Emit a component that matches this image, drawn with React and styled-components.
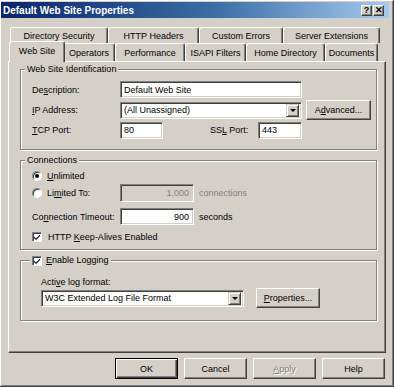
import React from 'react';
import styled, { createGlobalStyle } from 'styled-components';

const GlobalStyle = createGlobalStyle`
  body {
    margin: 0;
    background: #d4d0c8;
    font-family: "Liberation Sans", Arial, sans-serif;
    font-size: 9px;
    color: #000;
  }
  u { text-underline-offset: 1px; }
`;

const Window = styled.div`
  box-sizing: border-box;
  width: 394px;
  height: 387px;
  padding: 2px 5px 0 1px;
  background: #d4d0c8;
  box-shadow: inset -1px -1px #404040, inset 1px 1px #fff, inset -2px -2px #808080;
  display: flex;
  flex-direction: column;
`;

const TitleBar = styled.div`
  height: 16px;
  display: flex;
  align-items: center;
  justify-content: space-between;
  padding: 0 5px 0 2px;
  background: linear-gradient(to right, #0a246a 0%, #3a6ea5 55%, #a6caf0 100%);
  color: #fff;
  font-size: 10px;
  font-weight: bold;
`;

const TitleButtons = styled.div`
  display: flex;
  gap: 1px;
`;

const TitleButton = styled.div`
  box-sizing: border-box;
  width: 11px;
  height: 11px;
  background: #d4d0c8;
  color: #000;
  border: 1px solid;
  border-color: #fff #404040 #404040 #fff;
  box-shadow: inset -1px -1px #808080;
  display: flex;
  align-items: center;
  justify-content: center;
  font-size: 9px;
  font-weight: bold;
  line-height: 1;
`;

const Body = styled.div`
  padding: 9px 0 0 7px;
  display: flex;
  flex-direction: column;
`;

const TabRow = styled.div`
  display: flex;
  align-items: flex-end;
  height: ${p => p.$h}px;
  padding-left: ${p => p.$indent}px;
`;

const Tab = styled.div`
  box-sizing: border-box;
  width: ${p => p.$w + (p.$active ? 4 : 0)}px;
  height: ${p => (p.$active ? p.$h + 3 : p.$h)}px;
  margin: ${p => (p.$active ? '0 -2px -1px' : '0')};
  position: ${p => (p.$active ? 'relative' : 'static')};
  z-index: ${p => (p.$active ? 1 : 'auto')};
  padding-bottom: ${p => (p.$active ? 3 : 0)}px;
  background: #d4d0c8;
  border-top: 1px solid #fff;
  border-left: 1px solid #fff;
  border-right: 1px solid #404040;
  border-radius: 3px 3px 0 0;
  box-shadow: inset -1px 0 #808080;
  display: flex;
  align-items: center;
  justify-content: center;
  white-space: nowrap;
`;

const Panel = styled.div`
  box-sizing: border-box;
  width: 378px;
  height: 292px;
  border-top: 1px solid #fff;
  border-left: 1px solid #fff;
  border-right: 1px solid #404040;
  border-bottom: 1px solid #404040;
  box-shadow: inset -1px -1px #808080;
  padding: 2px 0 0 11px;
  display: flex;
  flex-direction: column;
  gap: 5px;
`;

const Group = styled.fieldset`
  box-sizing: border-box;
  width: 357px;
  height: ${p => p.$h}px;
  margin: 0;
  padding: 0 0 0 4px;
  border: 1px solid #808080;
  box-shadow: 1px 1px 0 #fff, inset 1px 1px 0 #fff;
  min-width: 0;
`;

const Legend = styled.legend`
  padding: 0 2px;
  margin-left: ${p => p.$indent || 0}px;
  background: #d4d0c8;
  line-height: 11px;
  display: flex;
  align-items: center;
  gap: 4px;
`;

const GroupBody = styled.div`
  display: flex;
  flex-direction: column;
  padding: ${p => p.$top}px 0 0 ${p => p.$left}px;
`;

const Row = styled.div`
  display: flex;
  align-items: center;
  height: ${p => p.$h}px;
  margin-top: ${p => p.$mt || 0}px;
  white-space: nowrap;
`;

const Label = styled.span`
  display: inline-flex;
  align-items: center;
  width: ${p => (p.$w ? `${p.$w}px` : 'auto')};
  margin-left: ${p => p.$ml || 0}px;
  color: ${p => (p.$dim ? '#808080' : '#000')};
  flex-shrink: 0;
`;

const Field = styled.div`
  box-sizing: border-box;
  width: ${p => p.$w}px;
  height: ${p => p.$h || 17}px;
  background: ${p => (p.$disabled ? '#d4d0c8' : '#fff')};
  color: ${p => (p.$disabled ? '#808080' : '#000')};
  border: 1px solid;
  border-color: #808080 #fff #fff #808080;
  box-shadow: inset 1px 1px #404040, inset -1px -1px #d4d0c8;
  padding: 0 ${p => (p.$select ? 2 : 4)}px 0 3px;
  display: flex;
  align-items: center;
  justify-content: ${p => (p.$right ? 'flex-end' : 'flex-start')};
  white-space: nowrap;
  overflow: hidden;
  flex-shrink: 0;
`;

const DropButton = styled.div`
  box-sizing: border-box;
  width: 13px;
  height: 13px;
  margin-left: auto;
  background: #d4d0c8;
  border: 1px solid;
  border-color: #d4d0c8 #404040 #404040 #d4d0c8;
  box-shadow: inset 1px 1px #fff, inset -1px -1px #808080;
  display: flex;
  align-items: center;
  justify-content: center;
  &::after {
    content: '';
    border-left: 3px solid transparent;
    border-right: 3px solid transparent;
    border-top: 3px solid #000;
  }
`;

const Button = styled.div`
  box-sizing: border-box;
  width: ${p => p.$w}px;
  height: ${p => p.$h || 20}px;
  margin-left: ${p => p.$ml || 0}px;
  background: #d4d0c8;
  border: 1px solid;
  border-color: ${p => (p.$default ? '#000' : '#fff #404040 #404040 #fff')};
  box-shadow: ${p =>
    p.$default
      ? 'inset 1px 1px #fff, inset -1px -1px #404040, inset -2px -2px #808080'
      : 'inset -1px -1px #808080'};
  color: ${p => (p.$disabled ? '#808080' : '#000')};
  text-shadow: ${p => (p.$disabled ? '1px 1px #fff' : 'none')};
  display: flex;
  align-items: center;
  justify-content: center;
  flex-shrink: 0;
`;

const Radio = styled.span`
  box-sizing: border-box;
  width: 10px;
  height: 10px;
  border-radius: 50%;
  background: #fff;
  border: 1px solid;
  border-color: #808080 #fff #fff #808080;
  box-shadow: inset 1px 1px #404040;
  display: inline-flex;
  align-items: center;
  justify-content: center;
  margin-right: 5px;
  flex-shrink: 0;
  &::after {
    content: '';
    width: 4px;
    height: 4px;
    border-radius: 50%;
    background: ${p => (p.$on ? '#000' : 'transparent')};
  }
`;

const CheckBox = styled.span`
  box-sizing: border-box;
  width: 10px;
  height: 10px;
  background: #fff;
  border: 1px solid;
  border-color: #808080 #fff #fff #808080;
  box-shadow: inset 1px 1px #404040;
  display: inline-flex;
  align-items: center;
  justify-content: center;
  margin-right: ${p => p.$mr ?? 6}px;
  flex-shrink: 0;
`;

const Footer = styled.div`
  width: 378px;
  display: flex;
  justify-content: flex-end;
  gap: 6px;
  margin-top: 5px;
  padding-right: 1px;
  box-sizing: border-box;
`;

const Check = ({ mr }) => (
  <CheckBox $mr={mr}>
    <svg width="8" height="8" viewBox="0 0 8 8">
      <path d="M1 3.5 L3 5.5 L7 1.5 L7 3 L3 7 L1 5 Z" fill="#000" />
    </svg>
  </CheckBox>
);

const row1 = [
  ['Directory Security', 98],
  ['HTTP Headers', 91],
  ['Custom Errors', 84],
  ['Server Extensions', 97],
];

const row2 = [
  ['Web Site', 52, true],
  ['Operators', 52],
  ['Performance', 70],
  ['ISAPI Filters', 61],
  ['Home Directory', 79],
  ['Documents', 53],
];

export default function App() {
  return (
    <>
      <GlobalStyle />
      <Window>
        <TitleBar>
          <span>Default Web Site Properties</span>
          <TitleButtons>
            <TitleButton>?</TitleButton>
            <TitleButton>✕</TitleButton>
          </TitleButtons>
        </TitleBar>
        <Body>
          <TabRow $h={16} $indent={2}>
            {row1.map(([t, w]) => (
              <Tab key={t} $w={w} $h={16}>{t}</Tab>
            ))}
          </TabRow>
          <TabRow $h={18} $indent={3}>
            {row2.map(([t, w, a]) => (
              <Tab key={t} $w={w} $h={18} $active={a}>{t}</Tab>
            ))}
          </TabRow>
          <Panel>
            <Group $h={86}>
              <Legend>Web Site Identification</Legend>
              <GroupBody $top={6} $left={7}>
                <Row $h={17}>
                  <Label $w={88}><span>De<u>s</u>cription:</span></Label>
                  <Field $w={182}>Default Web Site</Field>
                </Row>
                <Row $h={20} $mt={2}>
                  <Label $w={88}><span><u>I</u>P Address:</span></Label>
                  <Field $w={182} $select>
                    (All Unassigned)
                    <DropButton />
                  </Field>
                  <Button $w={65} $ml={4}><span>A<u>d</u>vanced...</span></Button>
                </Row>
                <Row $h={18} $mt={1}>
                  <Label $w={88}><span><u>T</u>CP Port:</span></Label>
                  <Field $w={43}>80</Field>
                  <Label $w={48} $ml={47}><span>SS<u>L</u> Port:</span></Label>
                  <Field $w={44}>443</Field>
                </Row>
              </GroupBody>
            </Group>

            <Group $h={95}>
              <Legend>Connections</Legend>
              <GroupBody $top={3} $left={7}>
                <Row $h={13}>
                  <Radio $on />
                  <span><u>U</u>nlimited</span>
                </Row>
                <Row $h={18} $mt={2}>
                  <Label $w={88}>
                    <Radio />
                    <span>Li<u>m</u>ited To:</span>
                  </Label>
                  <Field $w={74} $h={18} $disabled $right>1,000</Field>
                  <Label $ml={5} $dim>connections</Label>
                </Row>
                <Row $h={17} $mt={6}>
                  <Label $w={88}><span>Co<u>n</u>nection Timeout:</span></Label>
                  <Field $w={74} $right>900</Field>
                  <Label $ml={5}>seconds</Label>
                </Row>
                <Row $h={13} $mt={5}>
                  <Check />
                  <span>HTTP <u>K</u>eep-Alives Enabled</span>
                </Row>
              </GroupBody>
            </Group>

            <Group $h={66}>
              <Legend $indent={5}>
                <Check mr={0} />
                <span><u>E</u>nable Logging</span>
              </Legend>
              <GroupBody $top={10} $left={16}>
                <Row $h={11}>
                  <span>Acti<u>v</u>e log format:</span>
                </Row>
                <Row $h={20} $mt={1}>
                  <Field $w={203} $select>
                    W3C Extended Log File Format
                    <DropButton />
                  </Field>
                  <Button $w={64} $ml={12}><span><u>P</u>roperties...</span></Button>
                </Row>
              </GroupBody>
            </Group>
          </Panel>
          <Footer>
            <Button $w={63} $h={21} $default>OK</Button>
            <Button $w={63} $h={21}>Cancel</Button>
            <Button $w={63} $h={21} $disabled><span><u>A</u>pply</span></Button>
            <Button $w={63} $h={21}>Help</Button>
          </Footer>
        </Body>
      </Window>
    </>
  );
}
